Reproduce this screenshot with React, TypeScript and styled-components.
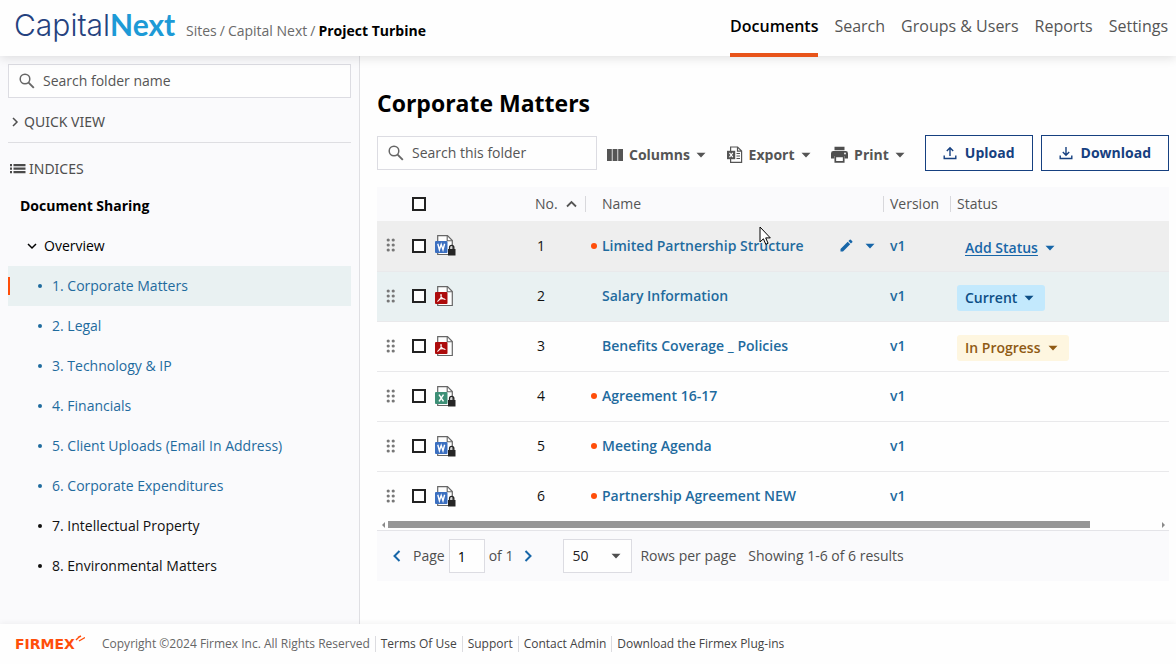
import React from "react";
import styled, { createGlobalStyle } from "styled-components";

const Global = createGlobalStyle`
  * { box-sizing: border-box; }
  body { margin: 0; background: #fefefe; color: #4f4f4f; }
  body, button, input, select {
    font-family: "Open Sans", "Noto Sans", sans-serif;
    font-size: 14px;
    line-height: 20px;
  }
  button { cursor: pointer; }
  a { text-decoration: none; color: inherit; }
`;

const Page = styled.div`
  min-height: 100vh;
  display: flex;
  flex-direction: column;
`;

const Header = styled.header`
  height: 56px;
  display: flex;
  justify-content: space-between;
  padding: 0 8px 0 14px;
  background: #fefefe;
  box-shadow: 0 2px 10px rgba(0, 0, 0, 0.12);
  position: relative;
`;

const Brand = styled.div`
  display: flex;
  align-items: center;
  gap: 8px;
`;

const Crumbs = styled.nav`
  display: flex;
  gap: 3px;
  padding-top: 6px;
  color: #6a6a6a;
  white-space: nowrap;
`;

const Current = styled.span`
  color: #000;
  font-weight: 700;
`;

const MainNav = styled.nav`
  display: flex;
  gap: 16px;
`;

const NavLink = styled.a<{ $active?: boolean }>`
  height: 57px;
  padding-top: 16px;
  font-size: 16px;
  font-weight: ${(p) => (p.$active ? 600 : 500)};
  color: ${(p) => (p.$active ? "#000" : "#555")};
  border-bottom: 4px solid ${(p) => (p.$active ? "#e8541a" : "transparent")};
  white-space: nowrap;
`;

const Body = styled.div`
  flex: 1;
  display: flex;
`;

const Sidebar = styled.aside`
  width: 360px;
  flex: none;
  padding: 8px;
  background: #fafafc;
  border-right: 1px solid #dfdfe3;
`;

const SearchBox = styled.label<{ $width: string }>`
  display: flex;
  align-items: center;
  gap: 7px;
  width: ${(p) => p.$width};
  height: 34px;
  padding: 0 10px;
  background: #fefefe;
  border: 1px solid #dcdce2;
  color: #666;
  svg { flex: none; }
`;

const SearchInput = styled.input`
  flex: 1;
  min-width: 0;
  border: 0;
  padding: 0;
  outline: 0;
  background: transparent;
  &::placeholder { color: #555; opacity: 1; }
`;

const SectionButton = styled.button<{ $gap: number }>`
  display: flex;
  align-items: center;
  gap: ${(p) => p.$gap}px;
  padding: 0 2px;
  border: 0;
  background: none;
  color: #4f4f4f;
  font-family: "Noto Sans", sans-serif;
`;

const QuickView = styled.div`
  height: 45px;
  padding-top: 14px;
  border-bottom: 1px solid #dedee2;
`;

const Indices = styled.div`
  padding-top: 16px;
`;

const Tree = styled.ul`
  list-style: none;
  margin: 7px 0 0;
  padding: 0;
`;

const TreeRow = styled.li<{ $level: number; $selected?: boolean }>`
  display: flex;
  align-items: center;
  height: 40px;
  padding-left: ${(p) => [12, 18, 28][p.$level]}px;
  gap: ${(p) => (p.$level === 1 ? 6 : 8)}px;
  color: #000;
  font-weight: ${(p) => (p.$level === 0 ? 700 : 400)};
  background: ${(p) => (p.$selected ? "#e9f1f2" : "transparent")};
  position: relative;
  &::before {
    content: "";
    display: ${(p) => (p.$selected ? "block" : "none")};
    position: absolute;
    left: 0;
    top: 11px;
    width: 2px;
    height: 18px;
    background: #ff4e0a;
  }
`;

const TreeLink = styled.a<{ $dark?: boolean }>`
  display: flex;
  align-items: center;
  gap: 10px;
  color: ${(p) => (p.$dark ? "#111" : "#1f6b9e")};
  &::before {
    content: "";
    width: 4px;
    height: 4px;
    margin-left: 2px;
    border-radius: 50%;
    background: currentColor;
  }
`;

const Main = styled.main`
  flex: 1;
  min-width: 0;
  padding: 31px 7px 0 17px;
`;

const Title = styled.h1`
  margin: 0;
  font-size: 23px;
  line-height: 32px;
  color: #000;
`;

const Toolbar = styled.div`
  display: flex;
  align-items: center;
  margin: 16px 0;
  height: 36px;
`;

const Tools = styled.div`
  flex: 1;
  display: flex;
  justify-content: space-between;
  padding: 3px 20px 0 10px;
`;

const ToolButton = styled.button`
  display: flex;
  align-items: center;
  gap: 6px;
  padding: 0;
  border: 0;
  background: none;
  font-weight: 700;
  color: #555;
`;

const OutlineButton = styled.button`
  height: 36px;
  display: flex;
  align-items: center;
  gap: 8px;
  padding: 0 17px;
  margin-right: 8px;
  border: 1px solid #164080;
  background: #fefefe;
  color: #164080;
  font-weight: 700;
  &:last-child { margin-right: 0; }
`;

const Grid = styled.table`
  width: 100%;
  table-layout: fixed;
  border-collapse: collapse;
`;

const HeadRow = styled.tr`
  height: 34px;
  background: #fafafc;
`;

const Th = styled.th`
  padding: 0;
  text-align: left;
  font-weight: 400;
  color: #555;
`;

const ThLabel = styled.span<{ $pad: number; $divider?: boolean }>`
  display: flex;
  align-items: center;
  gap: 8px;
  height: 16px;
  padding-left: ${(p) => p.$pad}px;
  border-right: ${(p) => (p.$divider ? "1px solid #d8d8dc" : "0")};
`;

const Row = styled.tr<{ $tone?: "hover" | "selected" }>`
  height: 50px;
  border-bottom: 1px solid #e9e9eb;
  background: ${(p) => (p.$tone === "hover" ? "#eeeeee" : p.$tone === "selected" ? "#e9f1f2" : "transparent")};
  &:last-child { border-bottom: 0; }
`;

const Td = styled.td`
  padding: 0;
  vertical-align: middle;
  color: #111;
  & > svg { display: block; }
`;

const NumberCell = styled(Td)`
  padding-left: 2px;
`;

const NameCell = styled.div`
  display: flex;
  align-items: center;
  gap: 5px;
  padding-left: 5px;
`;

const VersionCell = styled(NameCell)`
  padding-left: 6px;
`;

const Dot = styled.i<{ $on: boolean }>`
  width: 6px;
  height: 6px;
  border-radius: 50%;
  background: ${(p) => (p.$on ? "#ff4e0a" : "transparent")};
`;

const DocLink = styled.a`
  color: #1f6b9e;
  font-weight: 600;
`;

const RowActions = styled.span`
  display: flex;
  align-items: center;
  gap: 12px;
  margin-left: auto;
  padding-right: 9px;
`;

const IconButton = styled.button`
  display: flex;
  padding: 0;
  border: 0;
  background: none;
  color: #1766a8;
`;

const Grip = styled(IconButton)`
  margin-left: 9px;
`;

const Check = styled.input`
  appearance: none;
  display: block;
  width: 14px;
  height: 14px;
  margin: 0 0 0 7px;
  border: 2px solid #222;
  background: #fefefe;
`;

const tones = {
  add: { bg: "transparent", fg: "#1766a8" },
  current: { bg: "#c3e9fd", fg: "#0d4f86" },
  progress: { bg: "#fef6e0", fg: "#8f5a14" },
};

const Status = styled.button<{ $tone: keyof typeof tones }>`
  display: flex;
  align-items: center;
  gap: 7px;
  height: 26px;
  margin: 4px 0 0 6px;
  padding: 0 11px 0 8px;
  border: 0;
  border-radius: 3px;
  font-weight: 600;
  background: ${(p) => tones[p.$tone].bg};
  color: ${(p) => tones[p.$tone].fg};
  span { text-decoration: ${(p) => (p.$tone === "add" ? "underline" : "none")}; text-underline-offset: 2px; }
`;

const ScrollTrack = styled.div`
  display: flex;
  align-items: center;
  justify-content: space-between;
  height: 10px;
  padding: 0 3px 2px 4px;
  border-bottom: 1px solid #e4e4e8;
  color: #8a8a8a;
`;

const ScrollRail = styled.div`
  flex: 1;
  margin: 0 3px;
`;

const ScrollThumb = styled.div`
  width: 91%;
  height: 7px;
  background: #969696;
`;

const Pager = styled.div`
  display: flex;
  align-items: center;
  height: 50px;
  padding-left: 15px;
  background: #fafafc;
  white-space: nowrap;
`;

const PagerLabel = styled.label`
  display: flex;
  align-items: center;
  gap: 4px;
  margin: 0 11px 0 12px;
`;

const PageInput = styled.input`
  width: 36px;
  height: 34px;
  padding: 0 8px;
  border: 1px solid #dcdce2;
  background: #fefefe;
`;

const SelectWrap = styled.span`
  display: grid;
  align-items: center;
  margin-right: 4px;
  & > * { grid-area: 1 / 1; }
  svg { justify-self: end; margin-right: 11px; pointer-events: none; }
`;

const RowsSelect = styled.select`
  appearance: none;
  width: 69px;
  height: 34px;
  padding: 0 8px;
  border: 1px solid #dcdce2;
  border-radius: 0;
  background: #fefefe;
  color: #222;
`;

const RowsLabel = styled(PagerLabel)`
  margin: 0 12px 0 30px;
`;

const Footer = styled.footer`
  height: 40px;
  display: flex;
  align-items: center;
  padding-left: 15px;
  font-size: 12px;
  background: #fefefe;
  box-shadow: 0 -1px 6px rgba(0, 0, 0, 0.05);
  position: relative;
  white-space: nowrap;
`;

const FooterItem = styled.span`
  line-height: 16px;
  padding: 0 5px;
  border-right: 1px solid #dcdce0;
  color: #444;
  &:first-of-type { padding-left: 17px; color: #666; }
  &:last-child { border: 0; }
`;

const Pointer = styled.svg`
  position: absolute;
  left: 759px;
  top: 226px;
`;

const Magnifier = () => (
  <svg width="17" height="17" viewBox="0 0 17 17" fill="none" stroke="currentColor" strokeWidth="1.5">
    <circle cx="6" cy="6" r="4.8" />
    <path d="M9.6 9.6 14.8 14.8" strokeWidth="1.9" />
  </svg>
);

const Caret = () => (
  <svg width="10" height="6" viewBox="0 0 10 6"><path d="M.5.7h9L5 5.4z" fill="currentColor" /></svg>
);

const Chevron = ({ d, w, h, sw = 1.5 }: { d: string; w: number; h: number; sw?: number }) => (
  <svg width={w} height={h} viewBox={`0 0 ${w} ${h}`} fill="none" stroke="currentColor" strokeWidth={sw}><path d={d} /></svg>
);

const ScrollArrow = ({ d }: { d: string }) => (
  <svg width="4" height="6" viewBox="0 0 4 6" fill="currentColor"><path d={d} /></svg>
);

const ListIcon = () => (
  <svg width="16" height="10" viewBox="0 0 16 10" fill="#4a4a4a">
    {[0, 3.5, 7].map((y) => <path key={y} d={`M0 ${y}h2v2.2h-2zM3.5 ${y}h12v2.2h-12z`} />)}
  </svg>
);

const ColumnsIcon = () => (
  <svg width="16" height="12" viewBox="0 0 16 12" fill="currentColor"><path d="M0 0h4.8v12H0zM5.6 0h4.8v12H5.6zM11.2 0H16v12h-4.8z" /></svg>
);

const ExportIcon = () => (
  <svg width="16" height="18" viewBox="0 0 16 18">
    <path d="M3.6 5V1h7l4 4v11.4h-11V13M10.5 1v4.2h4" fill="none" stroke="#555" strokeWidth="1.2" />
    <path d="M9.5 7.5h3.5M9.5 10h3.5M9.5 12.5h3.5" stroke="#555" strokeWidth="1.1" />
    <path d="M0 4.8h8.2v8.4H0z" fill="#555" />
    <path d="m2.5 6.8 3.3 4.4M5.8 6.8l-3.3 4.4" stroke="#fff" strokeWidth="1.2" />
  </svg>
);

const PrintIcon = () => (
  <svg width="17" height="17" viewBox="0 0 17 17">
    <path d="M3.5.8h10v3.4h-10zM2.5 5h12A2.4 2.4 0 0 1 17 7.4v5h-3.4V10H3.4v2.4H0v-5A2.4 2.4 0 0 1 2.5 5z" fill="#4f4f4f" />
    <path d="M4.3 10.3h8.4v5.6H4.3z" fill="#fff" stroke="#4f4f4f" strokeWidth="1.7" />
    <circle cx="14" cy="7.5" r=".9" fill="#fff" />
  </svg>
);

const TransferIcon = ({ up }: { up?: boolean }) => (
  <svg width="14" height="14" viewBox="0 0 14 14" fill="none" stroke="currentColor" strokeWidth="1.4">
    <path d="M1.2 9.5v3h11.6v-3" />
    <path d={up ? "M7 10V2.2M3.8 5 7 1.8 10.2 5" : "M7 1v7.8M3.8 6 7 9.2 10.2 6"} />
  </svg>
);

const GripIcon = () => (
  <svg width="10" height="15" viewBox="0 0 10 15" fill="#777">
    {[2, 7, 12].map((y) => [2.2, 7.2].map((x) => <circle key={`${x}-${y}`} cx={x} cy={y} r="1.6" />))}
  </svg>
);

const PencilIcon = () => (
  <svg width="13" height="13" viewBox="0 0 13 13" fill="currentColor">
    <path d="M.5 10v2.5H3l7.2-7.2-2.5-2.5zM12.3 3.2a.8.8 0 0 0 0-1L10.8.7a.8.8 0 0 0-1 0L8.4 2.1l2.5 2.5z" />
  </svg>
);

type Kind = "word" | "excel" | "pdf";
const kindFill: Record<Kind, string> = { word: "#3b6fc0", excel: "#3d8f76", pdf: "#ad0b0b" };

const FileIcon = ({ kind, locked }: { kind: Kind; locked?: boolean }) => (
  <svg width="21" height="21" viewBox="0 0 21 21">
    <path d="M2.7.7h9.8l4.8 4.8v14H2.7z" fill="#fefefe" stroke="#666" strokeWidth="1.2" />
    <path d="M12.2.7v5h5" fill="none" stroke="#666" strokeWidth="1.1" />
    <rect y="6" width="12.5" height="12" rx="1" fill={kindFill[kind]} />
    {kind === "word" && <path d="m2.8 8.8 1.6 6 1.8-5.4L8 14.8l1.6-6" fill="none" stroke="#fff" strokeWidth="1.4" />}
    {kind === "excel" && <path d="m4 8.7 4.5 6.6M8.5 8.7 4 15.3" stroke="#fff" strokeWidth="1.5" />}
    {kind === "pdf" && <path d="M6 8.3c1 2.3-.7 5.5-3.6 7.2M6 8.3c-.8 2 1.3 5 4.5 5.2M3.7 13.6c1.8-1 4-1.2 6-.6" fill="none" stroke="#fff" strokeWidth="1.1" />}
    {locked && (
      <g>
        <path d="M14.6 14.5v-2a2.1 2.1 0 0 1 4.2 0v2" fill="none" stroke="#252525" strokeWidth="1.4" />
        <path d="M13 14h7.5v6.5H13z" fill="#252525" />
      </g>
    )}
  </svg>
);

const Logo = () => (
  <svg width="164" height="52" viewBox="0 0 164 52" role="img" aria-label="CapitalNext">
    <text x="0" y="34" fontFamily="Inter, sans-serif" fontWeight="300" fontSize="30" fill="#25427f">
      Capital<tspan fontFamily="Lato, sans-serif" fontWeight="700" fill="#1d9ad6">Next</tspan>
    </text>
  </svg>
);

const FirmexLogo = () => (
  <svg width="70" height="20" viewBox="0 0 70 20" role="img" aria-label="Firmex">
    <text x="0" y="15" fontFamily="DejaVu Sans, sans-serif" fontWeight="700" fontSize="14" fill="#ff4e0a">FIRMEX</text>
    <path d="m61 6 3-3M64 7 70 3.5M63 3.5 66 2" stroke="#ff4e0a" strokeWidth="1.4" />
  </svg>
);

const folders = [
  "1. Corporate Matters",
  "2. Legal",
  "3. Technology & IP",
  "4. Financials",
  "5. Client Uploads (Email In Address)",
  "6. Corporate Expenditures",
  "7. Intellectual Property",
  "8. Environmental Matters",
];

interface Doc {
  name: string;
  kind: Kind;
  unread: boolean;
  tone?: "hover" | "selected";
  status?: [keyof typeof tones, string];
}

const docs: Doc[] = [
  { name: "Limited Partnership Structure", kind: "word", unread: true, tone: "hover", status: ["add", "Add Status"] },
  { name: "Salary Information", kind: "pdf", unread: false, tone: "selected", status: ["current", "Current"] },
  { name: "Benefits Coverage _ Policies", kind: "pdf", unread: false, status: ["progress", "In Progress"] },
  { name: "Agreement 16-17", kind: "excel", unread: true },
  { name: "Meeting Agenda", kind: "word", unread: true },
  { name: "Partnership Agreement NEW", kind: "word", unread: true },
];

export default function App() {
  return (
    <Page>
      <Global />
      <Header>
        <Brand>
          <Logo />
          <Crumbs aria-label="Breadcrumb">
            <a href="#sites">Sites</a>/<a href="#capital">Capital Next</a>/<Current>Project Turbine</Current>
          </Crumbs>
        </Brand>
        <MainNav>
          {["Documents", "Search", "Groups & Users", "Reports", "Settings"].map((n, i) => (
            <NavLink key={n} href="#nav" $active={i === 0}>{n}</NavLink>
          ))}
        </MainNav>
      </Header>

      <Body>
        <Sidebar>
          <SearchBox $width="100%">
            <Magnifier />
            <SearchInput aria-label="Search folder name" placeholder="Search folder name" />
          </SearchBox>
          <QuickView>
            <SectionButton $gap={4}>
              <Chevron w={10} h={10} d="m3 1 4 4-4 4" />QUICK VIEW
            </SectionButton>
          </QuickView>
          <Indices>
            <SectionButton $gap={3}><ListIcon />INDICES</SectionButton>
          </Indices>
          <Tree>
            <TreeRow $level={0}>Document Sharing</TreeRow>
            <TreeRow $level={1}><Chevron w={12} h={8} d="m2 2 4 4 4-4" />Overview</TreeRow>
            {folders.map((f, i) => (
              <TreeRow key={f} $level={2} $selected={i === 0}>
                <TreeLink href="#folder" $dark={i > 5}>{f}</TreeLink>
              </TreeRow>
            ))}
          </Tree>
        </Sidebar>

        <Main>
          <Title>Corporate Matters</Title>
          <Toolbar>
            <SearchBox $width="220px">
              <Magnifier />
              <SearchInput aria-label="Search this folder" placeholder="Search this folder" />
            </SearchBox>
            <Tools>
              <ToolButton><ColumnsIcon />Columns <Caret /></ToolButton>
              <ToolButton><ExportIcon />Export <Caret /></ToolButton>
              <ToolButton><PrintIcon />Print <Caret /></ToolButton>
            </Tools>
            <OutlineButton><TransferIcon up />Upload</OutlineButton>
            <OutlineButton><TransferIcon />Download</OutlineButton>
          </Toolbar>

          <Grid>
            <colgroup>
              <col style={{ width: 28 }} />
              <col style={{ width: 30 }} />
              <col style={{ width: 100 }} />
              <col style={{ width: 51 }} />
              <col />
              <col style={{ width: 67 }} />
              <col style={{ width: 218 }} />
            </colgroup>
            <thead>
              <HeadRow>
                <Th />
                <Th><Check type="checkbox" aria-label="Select all" /></Th>
                <Th />
                <Th><ThLabel $pad={0} $divider>No. <Chevron w={11} h={8} d="m1 6.5 4.5-4.5L10 6.5" sw={1.8} /></ThLabel></Th>
                <Th><ThLabel $pad={16} $divider>Name</ThLabel></Th>
                <Th><ThLabel $pad={6} $divider>Version</ThLabel></Th>
                <Th><ThLabel $pad={6}>Status</ThLabel></Th>
              </HeadRow>
            </thead>
            <tbody>
              {docs.map((d, i) => (
                <Row key={d.name} $tone={d.tone}>
                  <Td><Grip aria-label="Reorder"><GripIcon /></Grip></Td>
                  <Td><Check type="checkbox" aria-label={`Select ${d.name}`} /></Td>
                  <Td><FileIcon kind={d.kind} locked={d.unread} /></Td>
                  <NumberCell>{i + 1}</NumberCell>
                  <Td>
                    <NameCell>
                      <Dot $on={d.unread} />
                      <DocLink href="#doc">{d.name}</DocLink>
                      {i === 0 && (
                        <RowActions>
                          <IconButton aria-label="Edit"><PencilIcon /></IconButton>
                          <IconButton aria-label="More actions"><Caret /></IconButton>
                        </RowActions>
                      )}
                    </NameCell>
                  </Td>
                  <Td><VersionCell><DocLink href="#version">v1</DocLink></VersionCell></Td>
                  <Td>{d.status && <Status $tone={d.status[0]}><span>{d.status[1]}</span><Caret /></Status>}</Td>
                </Row>
              ))}
            </tbody>
          </Grid>
          <ScrollTrack>
            <ScrollArrow d="M4 0 1 3l3 3z" />
            <ScrollRail><ScrollThumb /></ScrollRail>
            <ScrollArrow d="m0 0 3 3-3 3z" />
          </ScrollTrack>
          <Pager>
            <IconButton aria-label="Previous page"><Chevron w={9} h={12} d="M7.5 1 2.5 6l5 5" sw={2} /></IconButton>
            <PagerLabel>Page <PageInput defaultValue="1" /> of 1</PagerLabel>
            <IconButton aria-label="Next page"><Chevron w={9} h={12} d="m1.5 1 5 5-5 5" sw={2} /></IconButton>
            <RowsLabel>
              <SelectWrap>
                <RowsSelect defaultValue="50"><option>50</option><option>100</option></RowsSelect>
                <Caret />
              </SelectWrap>
              Rows per page
            </RowsLabel>
            Showing 1-6 of 6 results
          </Pager>
        </Main>
      </Body>

      <Footer>
        <FirmexLogo />
        <FooterItem>Copyright ©2024 Firmex Inc. All Rights Reserved</FooterItem>
        <FooterItem><a href="#terms">Terms Of Use</a></FooterItem>
        <FooterItem><a href="#support">Support</a></FooterItem>
        <FooterItem><a href="#contact">Contact Admin</a></FooterItem>
        <FooterItem><a href="#plugins">Download the Firmex Plug-ins</a></FooterItem>
      </Footer>
      <Pointer width="14" height="20" viewBox="0 0 14 20">
        <path d="M1 1v15l3.4-3.2L6.8 18.3l2.3-1-2.4-5.4h4.6z" fill="#fff" stroke="#000" />
      </Pointer>
    </Page>
  );
}
